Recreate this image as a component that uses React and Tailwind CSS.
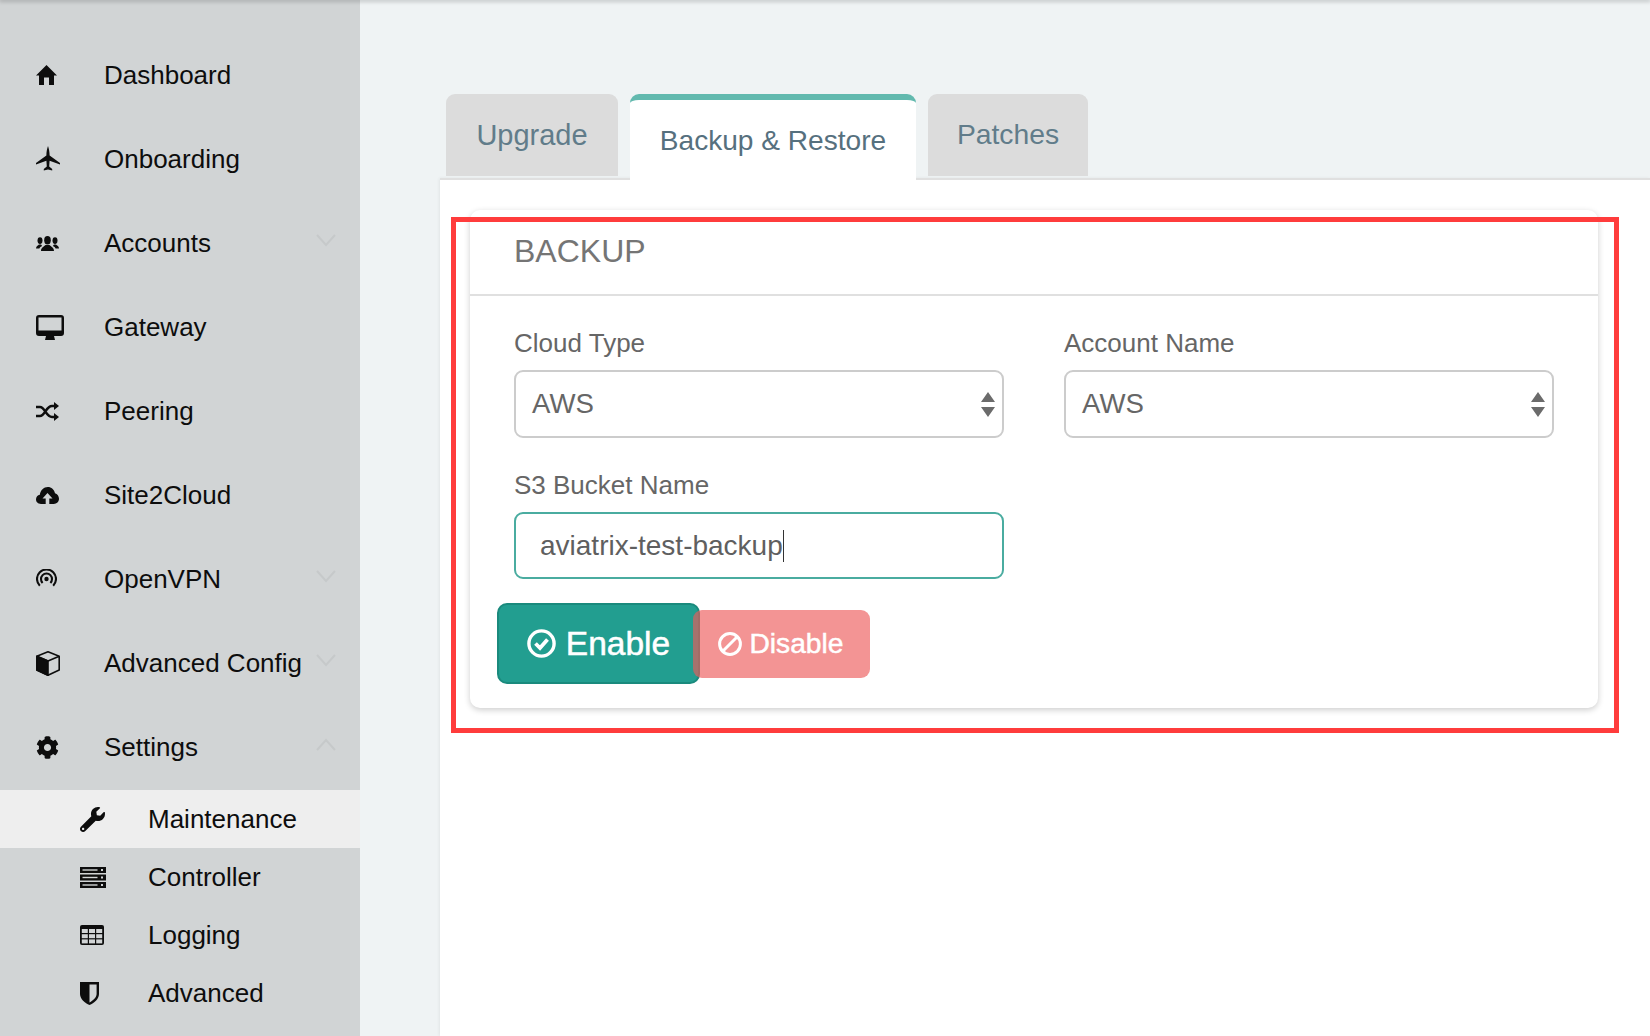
import React from 'react'
import { FaCog, FaWrench } from 'react-icons/fa'

const SIDE = '#d1d4d5'

const HomeIcon = () => (
  <svg width="21" height="20" viewBox="0 0 21 20" fill="currentColor">
    <path d="M10.5 0L21 10.5H18V20H13V12.5H8V20H3V10.5H0Z" />
  </svg>
)

const PlaneIcon = () => (
  <svg width="24" height="25" viewBox="0 0 24 25" fill="currentColor" className="-mt-[2px]">
    <path d="M12 0C13 3 13.6 6 13.6 9.5L24 17V18.4L13.6 14.8L13.2 20.5L16.2 23V24.4L12 23.4L7.8 24.4V23L10.8 20.5L10.4 14.8L0 18.4V17L10.4 9.5C10.4 6 11 3 12 0Z" />
  </svg>
)

const UsersIcon = () => (
  <svg width="23" height="15" viewBox="0 0 23 15" fill="currentColor">
    <ellipse cx="11.5" cy="4.2" rx="3.3" ry="4.2" />
    <path d="M5 15C5 11.5 8 10.5 9.5 9H13.5C15 10.5 18 11.5 18 15Z" />
    <ellipse cx="4" cy="4.6" rx="2.5" ry="3.4" />
    <ellipse cx="19" cy="4.6" rx="2.5" ry="3.4" />
    <path d="M0 12.5C0 10.3 2 9.5 3 8.5H5L6.2 10C4.8 10.6 3.8 11.4 3.4 12.5Z" />
    <path d="M23 12.5C23 10.3 21 9.5 20 8.5H18L16.8 10C18.2 10.6 19.2 11.4 19.6 12.5Z" />
  </svg>
)

const DesktopIcon = () => (
  <svg width="28" height="25" viewBox="0 0 28 25" fill="currentColor">
    <path fillRule="evenodd" d="M3 0H25A3 3 0 0 1 28 3V18A3 3 0 0 1 25 21H3A3 3 0 0 1 0 18V3A3 3 0 0 1 3 0ZM2.5 2.5V15.5H25.5V2.5Z" />
    <path d="M10 21H18L19 25H9Z" />
  </svg>
)

const ShuffleIcon = () => (
  <svg width="23" height="19" viewBox="0 0 23 19" fill="currentColor">
    <path d="M0 5H4C9 5 10 15 16 15H19M0 14H4C9 14 10 4 16 4H19" fill="none" stroke="currentColor" strokeWidth="2.6" />
    <path d="M18 0L23 4L18 8ZM18 11L23 15L18 19Z" />
  </svg>
)

const CloudIcon = () => (
  <svg width="23" height="17" viewBox="0 0 23 17" fill="currentColor">
    <path fillRule="evenodd" d="M5 17C2 17 0 15 0 12.3C0 10 1.6 8.3 3.8 7.8C4.4 3.3 7.8 0 11.8 0C15.4 0 18.3 2.6 19 6.3C21.4 7 23 9.2 23 11.8C23 14.8 20.7 17 17.8 17H13.3V11.5H16.5L11.5 6L6.5 11.5H9.7V17Z" />
  </svg>
)

const RadioIcon = () => (
  <svg width="21" height="20" viewBox="0 0 21 20" fill="none" stroke="currentColor" strokeWidth="2.1">
    <circle cx="10.5" cy="10" r="2.2" fill="currentColor" stroke="none" />
    <path d="M3.8 16.7A9.5 9.5 0 1 1 17.2 16.7" />
    <path d="M6.6 13.9A5.5 5.5 0 1 1 14.4 13.9" />
  </svg>
)

const CubeIcon = () => (
  <svg width="24" height="25" viewBox="0 0 24 25" fill="none" stroke="currentColor" strokeWidth="1.6" strokeLinejoin="round">
    <path d="M.8 5.2L12 10L12 24.2L.8 19Z" fill="currentColor" />
    <path d="M12 .8L23.2 5.2V19L12 24.2L.8 19V5.2ZM.8 5.2L12 10L23.2 5.2" />
  </svg>
)

const ServerIcon = () => (
  <svg width="26" height="21" viewBox="0 0 26 21">
    {[0, 7.5, 15].map((y) => (
      <g key={y}>
        <rect x="0" y={y} width="26" height="6" fill="currentColor" />
        <rect x="2.5" y={y + 2.3} width="15" height="1.4" fill={SIDE} />
        <rect x="21" y={y + 2} width="2" height="2" fill={SIDE} />
      </g>
    ))}
  </svg>
)

const TableIcon = () => (
  <svg width="24" height="20" viewBox="0 0 24 20">
    <rect width="24" height="20" rx="2" fill="currentColor" />
    {[4, 9.2, 14.4].map((y) =>
      [1.8, 9, 16.2].map((x) => (
        <rect key={`${x}-${y}`} x={x} y={y} width="6" height="4" fill={SIDE} />
      ))
    )}
  </svg>
)

const ShieldIcon = () => (
  <svg width="19" height="23" viewBox="0 0 19 23">
    <path d="M0 0H19V12C19 17 14 21 9.5 23C5 21 0 17 0 12Z" fill="currentColor" />
    <path d="M9.5 2.6H16.6V12C16.6 15.5 13 18.6 9.5 20.4Z" fill={SIDE} />
  </svg>
)

const Chevron = ({ up }) => (
  <svg width="20" height="13" viewBox="0 0 20 13" fill="none" stroke="#c6c9ca" strokeWidth="2">
    <path d={up ? 'M1 12L10 2L19 12' : 'M1 1L10 11L19 1'} />
  </svg>
)

const SelectArrows = () => (
  <svg width="14" height="25" viewBox="0 0 14 25" fill="#6b6b6b">
    <path d="M7 0L14 10H0ZM0 15H14L7 25Z" />
  </svg>
)

const mainNav = [
  { label: 'Dashboard', icon: <HomeIcon /> },
  { label: 'Onboarding', icon: <PlaneIcon /> },
  { label: 'Accounts', icon: <UsersIcon />, chevron: 'down' },
  { label: 'Gateway', icon: <DesktopIcon /> },
  { label: 'Peering', icon: <ShuffleIcon /> },
  { label: 'Site2Cloud', icon: <CloudIcon /> },
  { label: 'OpenVPN', icon: <RadioIcon />, chevron: 'down' },
  { label: 'Advanced Config', icon: <CubeIcon />, chevron: 'down' },
  { label: 'Settings', icon: <FaCog size={23} />, chevron: 'up' },
]

const subNav = [
  { label: 'Maintenance', icon: <FaWrench size={25} />, active: true },
  { label: 'Controller', icon: <ServerIcon /> },
  { label: 'Logging', icon: <TableIcon /> },
  { label: 'Advanced', icon: <ShieldIcon /> },
]

function Sidebar() {
  return (
    <aside className="w-[360px] shrink-0 bg-[#d1d4d5] pt-[33px] text-[26px] text-[#0d0d0d]">
      {mainNav.map((item) => (
        <div key={item.label} className="relative flex h-[84px] items-center pl-[36px]">
          <span className="flex w-[68px] shrink-0 items-center">{item.icon}</span>
          <span>{item.label}</span>
          {item.chevron && (
            <span className="absolute left-[316px] top-[33px] flex">
              <Chevron up={item.chevron === 'up'} />
            </span>
          )}
        </div>
      ))}
      <div className="mt-[1px]">
        {subNav.map((item) => (
          <div
            key={item.label}
            className={`flex h-[58px] items-center pl-[80px] ${item.active ? 'bg-[#eeeeee]' : ''}`}
          >
            <span className="flex w-[68px] shrink-0 items-center">{item.icon}</span>
            <span>{item.label}</span>
          </div>
        ))}
      </div>
    </aside>
  )
}

function SelectBox({ label }) {
  return (
    <div>
      <div className="mb-[12px] h-[30px] text-[26px] leading-[30px] text-[#666666]">{label}</div>
      <div className="flex h-[68px] items-center justify-between rounded-[9px] border-2 border-[#cccccc] pl-[16px] pr-[7px] text-[27.6px] text-[#666666]">
        <span>AWS</span>
        <SelectArrows />
      </div>
    </div>
  )
}

function Tabs() {
  return (
    <div className="relative z-10 flex h-[84px] items-start gap-[12px] pl-[6px]">
      <div className="flex h-[82px] w-[172px] items-center justify-center rounded-t-[9px] bg-[#dcdcdc] pt-[1px] text-[29px] text-[#617c8a]">
        Upgrade
      </div>
      <div className="flex h-[86px] w-[286px] items-center justify-center rounded-t-[9px] border-t-[6px] border-[#62b9ae] bg-white pt-[2px] text-[28.1px] text-[#56707e]">
        Backup &amp; Restore
      </div>
      <div className="flex h-[82px] w-[160px] items-center justify-center rounded-t-[9px] bg-[#dcdcdc] pb-[1px] text-[28.3px] text-[#617c8a]">
        Patches
      </div>
    </div>
  )
}

function BackupCard() {
  return (
    <div className="relative ml-[30px] mr-[52px] rounded-[10px] bg-white shadow-[0_2px_6px_rgba(0,0,0,0.2)]">
      <div className="flex h-[86px] items-center border-b-2 border-[#e0e0e0] pb-[3px] pl-[44px] text-[32px] text-[#757575]">
        BACKUP
      </div>
      <div className="pb-[24px] pl-[44px] pr-[44px] pt-[32px]">
        <div className="grid grid-cols-2 gap-x-[60px]">
          <SelectBox label="Cloud Type" />
          <SelectBox label="Account Name" />
        </div>
        <div className="mt-[32px] w-[490px]">
          <div className="mb-[12px] h-[30px] text-[26px] leading-[30px] text-[#666666]">S3 Bucket Name</div>
          <div className="flex h-[67px] items-center rounded-[9px] border-2 border-[#4aaca0] pl-[24px] text-[28px] text-[#5f5f5f]">
            <span>aviatrix-test-backup</span>
            <span className="h-[32px] w-[1px] bg-[#333333]" />
          </div>
        </div>
        <div className="-ml-[17px] mt-[24px] flex items-center">
          <div className="flex h-[81px] w-[203px] items-center justify-center gap-[10px] rounded-[10px] border-2 border-[#1a8a7d] bg-[#229e90] text-[33.5px] text-white">
            <svg width="29" height="29" viewBox="0 0 29 29" fill="none" stroke="currentColor">
              <circle cx="14.5" cy="14.5" r="12.6" strokeWidth="3.4" />
              <path d="M8.5 14.5L13 19L20.5 10.5" strokeWidth="3.8" />
            </svg>
            <span className="pt-[2px] [-webkit-text-stroke:0.5px_white]">Enable</span>
          </div>
          <div className="-ml-[7.5px] flex h-[68px] w-[177px] items-center justify-center gap-[7px] rounded-[9px] bg-[#ed5b5b] text-[28.2px] text-white opacity-65">
            <svg width="24" height="24" viewBox="0 0 24 24" fill="none" stroke="currentColor" strokeWidth="3">
              <circle cx="12" cy="12" r="10.4" />
              <path d="M5 19L19 5" />
            </svg>
            <span className="[-webkit-text-stroke:0.5px_white]">Disable</span>
          </div>
        </div>
      </div>
      {/* callout box drawn over the screenshot */}
      <div className="pointer-events-none absolute -bottom-[25px] -left-[19px] -right-[21px] top-[7px] border-[5px] border-[#ff3c3c]" />
    </div>
  )
}

export default function App() {
  return (
    <div className="relative flex h-[1036px] w-[1650px] overflow-hidden bg-[#eff3f4] font-['Liberation_Sans',Arial,sans-serif]">
      <div className="absolute left-0 right-0 top-0 z-20 h-0 shadow-[0_0_4px_1px_rgba(0,0,0,0.35)]" />
      <Sidebar />
      <main className="ml-[80px] flex flex-1 flex-col pt-[94px]">
        <Tabs />
        <div className="flex-1 border-t-2 border-[#e0e0e0] bg-white pt-[30px] shadow-[-1px_0_3px_rgba(0,0,0,0.06)]">
          <BackupCard />
        </div>
      </main>
    </div>
  )
}
